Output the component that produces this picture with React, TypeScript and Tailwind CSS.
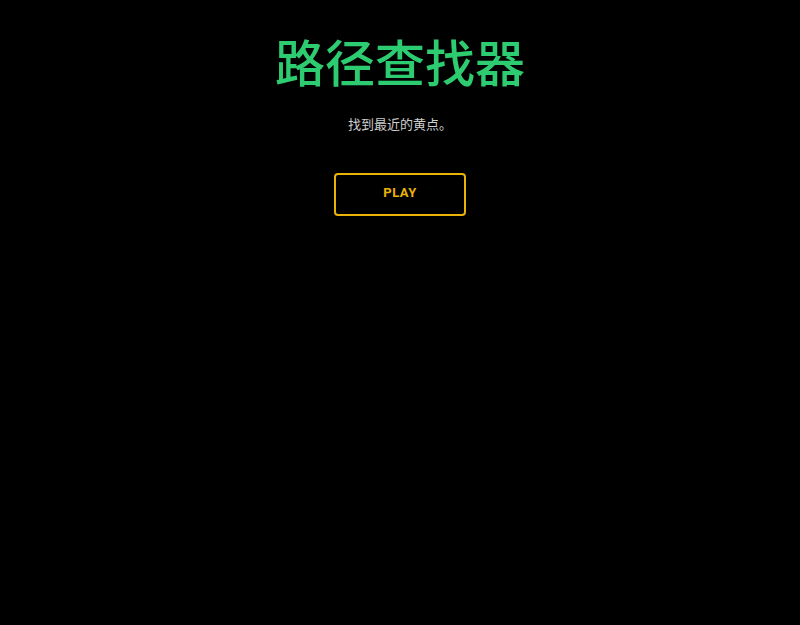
export default function App() {
  return (
    <div className="min-h-screen w-full bg-black flex flex-col items-center pt-[28px]">
      <h1 className="text-[50px] leading-[64px] font-medium text-[#2ecc71] font-['Noto_Sans_CJK_SC',sans-serif]">
        路径查找器
      </h1>
      <p className="mt-[24px] text-[13px] leading-[16px] text-[#cfcfcf] font-['Noto_Sans_CJK_SC',sans-serif]">
        找到最近的黄点。
      </p>
      <button className="mt-[41px] w-[132px] h-[43px] rounded-[4px] border-2 border-[#eab308] pb-[3px] text-[#eab308] text-[13px] font-bold tracking-[0.5px] font-['Roboto',sans-serif]">
        PLAY
      </button>
    </div>
  );
}
